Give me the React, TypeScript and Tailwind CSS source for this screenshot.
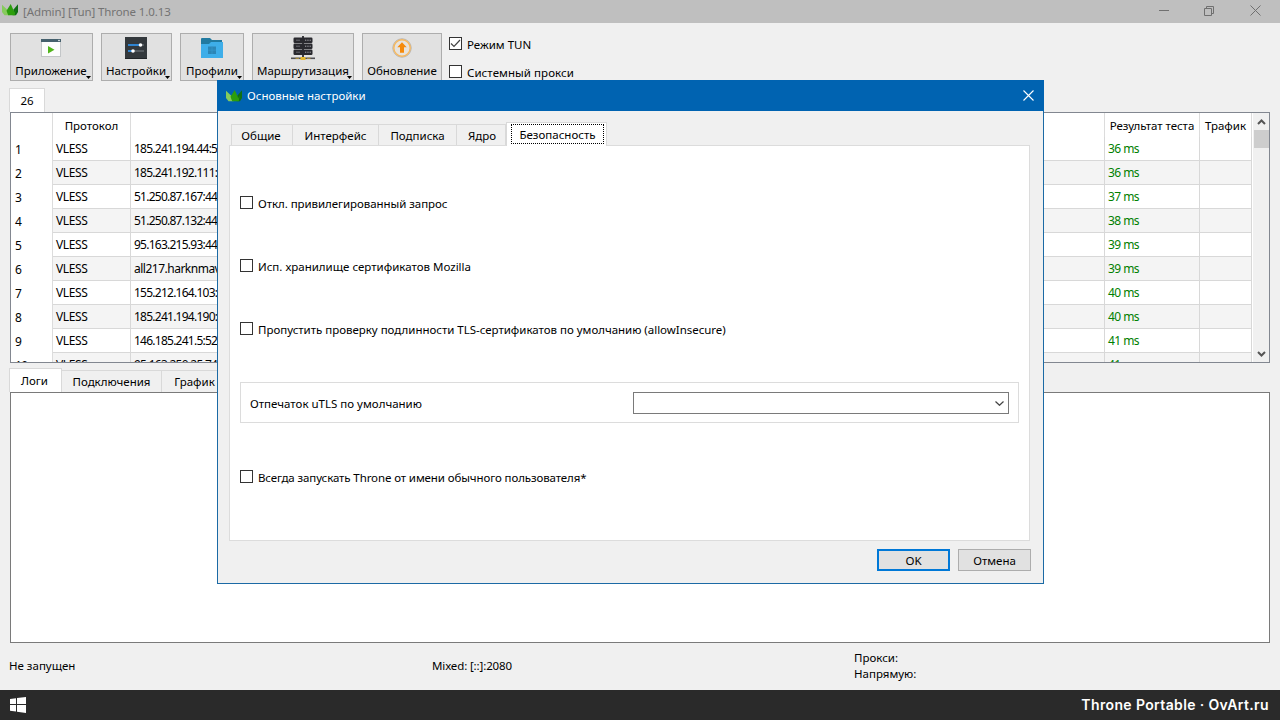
import type { ReactNode } from "react";

function Logo() {
  return (
    <svg width="16" height="12" viewBox="0 0 16 12" className="shrink-0">
      <path d="M0 .8 5 5.5 7.5 11.3H2.5L0 8Z" fill="#86cb5c" />
      <path d="M16 .3 11.5 5.5 10.5 11.3H14L16 8Z" fill="#107013" />
      <path d="M8.7 0 11 5 12.3 8.5 13.5 5.5 12.8 11.3H6.2L4.5 6.8Z" fill="#2c9e0c" />
    </svg>
  );
}

function AppIcon() {
  return (
    <svg width="20" height="18" viewBox="0 0 20 18">
      <path d="M0 0H20V18H0Z" fill="#fdfdfd" />
      <path d="M0 17.5H20M.5 3V18M19.5 3V18" stroke="#c3c6c8" />
      <path d="M0 0H20V3H0Z" fill="#45606d" />
      <circle cx="18" cy="1.5" r=".8" fill="#fff" />
      <path d="M7 7 13.5 10.7 7 14.5Z" fill="#52b51c" />
    </svg>
  );
}

function SettingsIcon() {
  return (
    <svg width="22" height="22" viewBox="0 0 22 22">
      <path d="M0 0H22V22H0Z" fill="#33383c" />
      <path d="M0 21.5H22" stroke="#202427" />
      <path d="M3 8H15M3 14H8" stroke="#2f83cf" strokeWidth="2" />
      <path d="M15 8H19M8 14H19" stroke="#555b60" strokeWidth="2" />
      <circle cx="15.5" cy="8" r="1.8" fill="#fff" />
      <circle cx="8" cy="14" r="1.8" fill="#fff" />
    </svg>
  );
}

function FolderIcon() {
  return (
    <svg width="22" height="20" viewBox="0 0 22 20">
      <path d="M0 1Q0 0 1 0H9L11 2H21V7H0Z" fill="#217aa0" />
      <path d="M0 6H8L10 4H22V20H0Z" fill="#3eaee9" />
      <path d="M7 8.5H15V16H7Z" fill="#2c86b6" />
      <path d="M11 8.5V16M7 12.2H15" stroke="#3598cb" strokeWidth=".7" />
    </svg>
  );
}

function ServerIcon() {
  return (
    <svg width="24" height="24" viewBox="0 0 24 24">
      <path d="M12 0V22" stroke="#3c3c40" strokeWidth="2" />
      {[1.5, 7.5, 13.5].map((y) => (
        <g key={y}>
          <rect x="2.5" y={y} width="19" height="5.4" rx="1.2" fill="#29292e" />
          <path d={`M5 ${y + 2.7}H9`} stroke="#68686e" />
          <path d={`M14 ${y + 2.7}H20`} stroke="#a5a5ab" strokeDasharray="1.3 1" />
        </g>
      ))}
      <path d="M0 22.3H24" stroke="#505055" strokeWidth="1.6" />
      <path d="M9.5 21H14.5V24H9.5Z" fill="#e5b92f" />
      <path d="M4.5 22.3H8M16 22.3H19.5" stroke="#b79632" />
    </svg>
  );
}

function UpdateIcon() {
  return (
    <svg width="20" height="20" viewBox="0 0 20 20">
      <circle cx="10" cy="10" r="9.2" fill="#e7e3dd" stroke="#b5b1ac" />
      <circle cx="10" cy="10" r="8.2" fill="none" stroke="#f7b85d" strokeWidth="1.4" />
      <path d="M10 4.3 14.7 9.2H12V14.7H8V9.2H5.3Z" fill="#f58a0b" />
    </svg>
  );
}

function ToolButton({
  icon,
  label,
  size,
  menu = true,
}: {
  icon: ReactNode;
  label: string;
  size: string;
  menu?: boolean;
}) {
  return (
    <button className={`relative flex h-12 shrink-0 flex-col items-center border border-[#adadad] bg-[#e1e1e1] ${size}`}>
      <span className="flex h-7 items-center justify-center">{icon}</span>
      <span className="mt-px leading-4">{label}</span>
      {menu && (
        <svg width="5" height="3" viewBox="0 0 5 3" className="absolute right-[1px] bottom-[1px]">
          <path d="M0 0H5L2.5 3Z" fill="#000" />
        </svg>
      )}
    </button>
  );
}

function Check({ label, checked = false, size = "" }: { label: string; checked?: boolean; size?: string }) {
  return (
    <label className="flex h-[15px] items-start gap-[5px]">
      <span className="h-[13px] w-[13px] shrink-0 border border-[#333] bg-white">
        {checked && (
          <svg width="11" height="11" viewBox="0 0 11 11">
            <path d="M1 5.5 4 8.5 10 2" fill="none" stroke="#444" strokeWidth="1.2" />
          </svg>
        )}
      </span>
      <span className={`pt-px leading-[14px] whitespace-nowrap ${size}`}>{label}</span>
    </label>
  );
}

const rows = [
  ["185.241.194.44:52", "36 ms"],
  ["185.241.192.111:44", "36 ms"],
  ["51.250.87.167:443", "37 ms"],
  ["51.250.87.132:443", "38 ms"],
  ["95.163.215.93:443", "39 ms"],
  ["all217.harknmav", "39 ms"],
  ["155.212.164.103:44", "40 ms"],
  ["185.241.194.190:44", "40 ms"],
  ["146.185.241.5:52", "41 ms"],
  ["95.163.250.25:74", "41 ms"],
];

const cols = "grid grid-cols-[42px_78px_974px_95px_52px] grid-rows-[24px]";

function ServerTable() {
  return (
    <section className="flex h-[251px] border border-[#828790] bg-white">
      <div className="flex h-full w-[1241px] flex-col overflow-hidden">
        <div className={`${cols} h-6 shrink-0 text-center leading-[26px]`}>
          <span className="border-r border-[#dcdcdc]" />
          <span className="border-r border-[#dcdcdc]">Протокол</span>
          <span className="border-r border-[#dcdcdc]" />
          <span className="border-r border-[#dcdcdc] tracking-[-0.05px]">Результат теста</span>
          <span className="border-r border-[#dcdcdc]">Трафик</span>
        </div>
        {rows.map(([address, ping], i) => (
          <div
            key={address}
            className={`${cols} h-6 shrink-0 text-[12px] leading-[23px] ${i % 2 ? "bg-[#f4f4f4]" : "bg-white"}`}
          >
            <span className="border-r border-[#dcdcdc] bg-white pl-1 leading-[25px] tracking-[-0.6px]">{i + 1}</span>
            <span className="border-r border-b border-[#d8d8d8] pl-[3px] tracking-[-0.4px]">VLESS</span>
            <span
              className={`border-r border-b border-[#d8d8d8] pl-[3px] ${/^\d/.test(address) ? "tracking-[-0.75px]" : "tracking-[-0.5px]"}`}
            >
              {address}
            </span>
            <span className="border-r border-b border-[#d8d8d8] pl-[3px] tracking-[-0.55px] text-[#008000]">{ping}</span>
            <span className="border-r border-b border-[#d8d8d8]" />
          </div>
        ))}
      </div>
      <div className="ml-px flex w-4 flex-col items-center bg-[#f0f0f0]">
        <svg width="9" height="17" viewBox="0 0 9 17" className="shrink-0">
          <path d="M1 11 4.5 7.5 8 11" fill="none" stroke="#555" strokeWidth="2" />
        </svg>
        <span className="h-[18px] w-[15px] shrink-0 bg-[#cdcdcd]" />
        <svg width="9" height="17" viewBox="0 0 9 17" className="mt-auto shrink-0">
          <path d="M1 7 4.5 10.5 8 7" fill="none" stroke="#555" strokeWidth="2" />
        </svg>
      </div>
    </section>
  );
}

function SettingsDialog() {
  const tab = "mb-px flex h-[21px] items-center justify-center border-t border-r border-[#d9d9d9] pt-px";
  return (
    <div className="absolute top-20 left-[217px] flex h-[504px] w-[827px] flex-col border border-[#1b6aa5] bg-[#f0f0f0]">
      <header className="-mx-px -mt-px flex h-[31px] shrink-0 items-center bg-[#0063b1] pr-[10px] pl-[9px] text-white">
        <Logo />
        <span className="ml-[5px]">Основные настройки</span>
        <svg width="11" height="11" viewBox="0 0 11 11" className="-mt-px ml-auto">
          <path d="M.5.5 10.5 10.5M10.5.5.5 10.5" stroke="#fff" strokeWidth="1.1" />
        </svg>
      </header>
      <nav className="z-10 -mb-px flex h-[35px] shrink-0 items-end pl-[13px]">
        <span className={`${tab} w-[62px] border-l`}>
          <span className="-ml-0.5">Общие</span>
        </span>
        <span className={`${tab} w-[86px]`}>Интерфейс</span>
        <span className={`${tab} w-[78px]`}>Подписка</span>
        <span className={`${tab} w-[49px]`}>
          <span className="ml-0.5">Ядро</span>
        </span>
        <span className="flex h-6 w-[101px] items-start border border-b-0 border-[#d9d9d9] bg-white pt-px pl-1">
          <span className="flex h-5 w-[93px] items-center justify-center border border-dotted border-black pt-0.5">
            Безопасность
          </span>
        </span>
      </nav>
      <main className="mx-[11px] flex h-[396px] w-[801px] shrink-0 flex-col border border-[#dcdcdc] bg-white px-[10px] pt-[50px]">
        <Check label="Откл. привилегированный запрос" size="tracking-[-0.06px]" />
        <div className="mt-12">
          <Check label="Исп. хранилище сертификатов Mozilla" />
        </div>
        <div className="mt-12">
          <Check
            label="Пропустить проверку подлинности TLS-сертификатов по умолчанию (allowInsecure)"
            size="tracking-[-0.02px]"
          />
        </div>
        <div className="mt-[45px] flex h-[41px] w-[779px] items-center justify-between border border-[#dcdcdc] px-[9px]">
          <span className="pt-0.5">Отпечаток uTLS по умолчанию</span>
          <span className="flex h-[22px] w-[376px] items-center justify-end border border-[#7a7a7a] pt-0.5 pr-1">
            <svg width="9" height="5" viewBox="0 0 9 5">
              <path d="M.5.5 4.5 4.3 8.5.5" fill="none" stroke="#444" strokeWidth="1.2" />
            </svg>
          </span>
        </div>
        <div className="mt-[47px]">
          <Check label="Всегда запускать Throne от имени обычного пользователя*" size="tracking-[-0.11px]" />
        </div>
      </main>
      <footer className="mt-2 flex justify-end gap-2 pr-3">
        <button className="h-[22px] w-[73px] border-2 border-[#0078d7] bg-[#e1e1e1] leading-[19px]">OK</button>
        <button className="h-[22px] w-[73px] border border-[#adadad] bg-[#e1e1e1] leading-[22px]">Отмена</button>
      </footer>
    </div>
  );
}

export default function App() {
  return (
    <div className="relative flex h-[720px] w-[1280px] flex-col overflow-hidden bg-[#f0f0f0] font-['Noto_Sans',sans-serif] text-[11.5px] text-black">
      <header className="flex h-[23px] shrink-0 items-center bg-[#bfbfbf] pl-0.5 text-[#737373]">
        <span className="-mt-1">
          <Logo />
        </span>
        <span className="ml-[5px] tracking-[-0.1px]">[Admin] [Tun] Throne 1.0.13</span>
        <svg width="104" height="12" viewBox="0 0 104 12" className="-mt-[3px] mr-[18px] ml-auto">
          <path d="M1 6.5H11M46.5 4.5H53.5V11.5H46.5ZM48.5 4.5V2.5H55.5V9.5H53.5M92.5 1.5 102.5 11.5M102.5 1.5 92.5 11.5" fill="none" stroke="#707070" />
        </svg>
      </header>
      <div className="flex h-[65px] shrink-0 gap-2 pt-[10px] pl-[10px]">
        <ToolButton icon={<AppIcon />} label="Приложение" size="w-[83px] pr-px" />
        <ToolButton icon={<SettingsIcon />} label="Настройки" size="w-[71px] pr-px" />
        <ToolButton icon={<FolderIcon />} label="Профили" size="w-16" />
        <ToolButton icon={<ServerIcon />} label="Маршрутизация" size="w-[102px]" />
        <ToolButton icon={<UpdateIcon />} label="Обновление" size="w-20" menu={false} />
        <div className="-ml-px flex flex-col gap-[13px] pt-1">
          <Check label="Режим TUN" checked />
          <Check label="Системный прокси" size="tracking-[0.06px]" />
        </div>
      </div>
      <div className="ml-[9px] flex h-6 w-9 shrink-0 items-center justify-center border border-b-0 border-[#d9d9d9] bg-white">26</div>
      <div className="mx-[10px] shrink-0">
        <ServerTable />
      </div>
      <nav className="ml-[9px] flex h-[29px] shrink-0 items-end">
        <span className="flex h-6 w-[53px] items-center justify-center border border-b-0 border-[#d9d9d9] bg-white pr-0.5">Логи</span>
        <span className="flex h-[22px] w-[100px] items-center justify-center border-t border-r border-[#d9d9d9]">Подключения</span>
        <span className="flex h-[22px] w-[66px] items-center justify-center border-t border-r border-[#d9d9d9]">График</span>
      </nav>
      <div className="mx-[10px] h-[251px] shrink-0 border border-[#7a7a7a] bg-white" />
      <div className="flex h-[47px] shrink-0 items-center pb-0.5 pl-[9px]">
        <span className="w-[423px]">Не запущен</span>
        <span className="w-[422px] tracking-[-0.13px]">Mixed: [::]:2080</span>
        <span className="leading-4">
          Прокси:
          <br />
          Напрямую:
        </span>
      </div>
      <footer className="flex h-[30px] shrink-0 items-center justify-between bg-[#2a2a2a] pr-[11px] pl-[10px] text-white">
        <svg width="16" height="16" viewBox="0 0 16 16" fill="#fff">
          <path d="M0 2 6 1.2V7H0ZM7 1 16 0V7H7ZM0 8H6V14.6L0 13.8ZM7 8H16V16L7 14.8Z" />
        </svg>
        <span className="-mt-0.5 font-['Inter',sans-serif] text-[14px] font-semibold tracking-[0.37px]">Throne Portable · OvArt.ru</span>
      </footer>
      <SettingsDialog />
    </div>
  );
}
